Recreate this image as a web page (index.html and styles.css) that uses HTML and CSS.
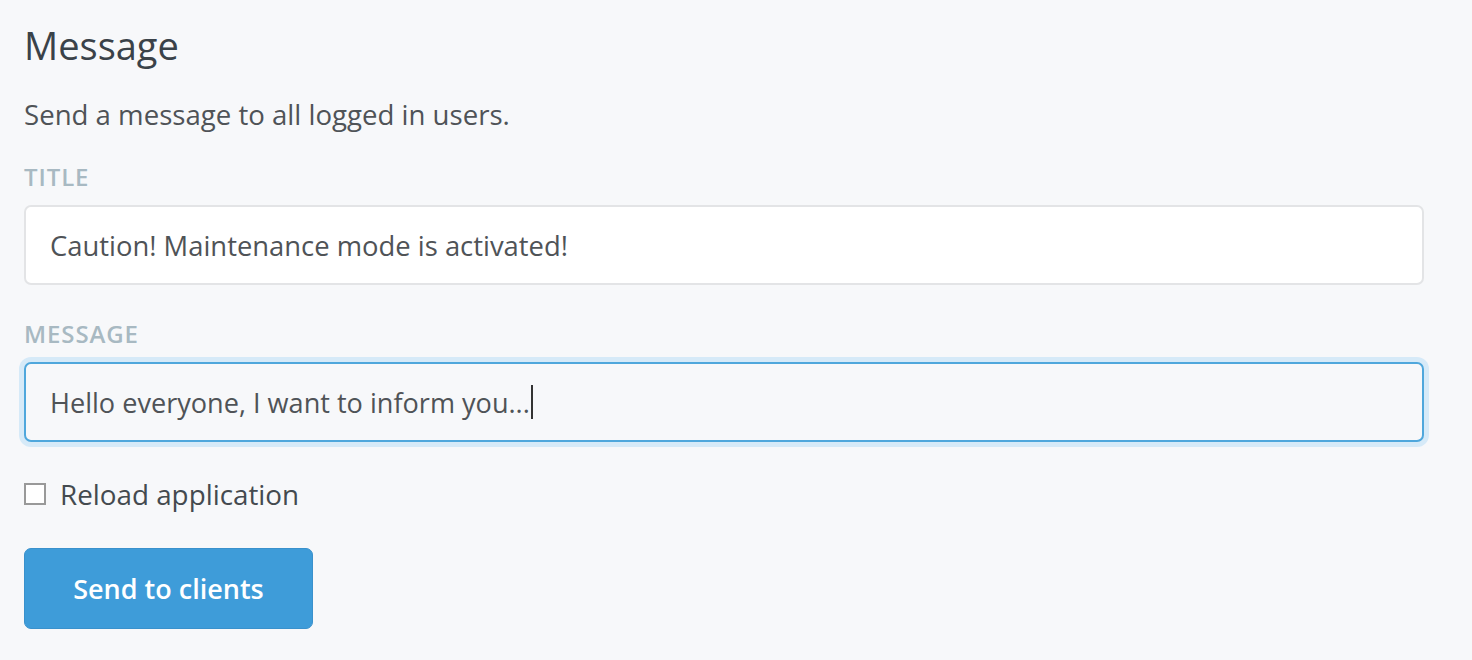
FILE: index.html
```html
<!DOCTYPE html>
<html lang="en">
<head>
<meta charset="utf-8">
<title>Message</title>
<link rel="stylesheet" href="styles.css">
</head>
<body>
<main class="page">
  <h1 class="title">Message</h1>
  <p class="intro">Send a message to all logged in users.</p>
  <form class="form">
    <div class="group">
      <label class="label" for="f-title">Title</label>
      <div class="input" id="f-title">Caution! Maintenance mode is activated!</div>
    </div>
    <div class="group">
      <label class="label" for="f-msg">Message</label>
      <div class="input input--focus" id="f-msg">Hello everyone, I want to inform you...<span class="caret"></span></div>
    </div>
    <label class="check">
      <span class="check__box"></span>
      <span class="check__text">Reload application</span>
    </label>
    <div class="actions">
      <button type="button" class="btn">Send to clients</button>
    </div>
  </form>
</main>
</body>
</html>
```
FILE: styles.css
```css
* { box-sizing: border-box; }
body {
  margin: 0;
  background: #f7f8fa;
  font-family: "Open Sans", "Noto Sans", sans-serif;
  color: #4f5357;
}
.page {
  padding: 17px 48px 0 24px;
}
.title {
  margin: 0;
  font-size: 38px;
  line-height: 56px;
  font-weight: 400;
  color: #3a4249;
}
.intro {
  margin: 21px 0 0;
  font-size: 27.6px;
  line-height: 40px;
}
.form {
  display: flex;
  flex-direction: column;
  margin-top: 28px;
}
.group {
  display: flex;
  flex-direction: column;
  gap: 13px;
}
.group + .group {
  margin-top: 34px;
}
.label {
  font-size: 24px;
  line-height: 30px;
  font-weight: 600;
  text-transform: uppercase;
  letter-spacing: 0.9px;
  color: #a8b9c2;
}
.input {
  display: flex;
  align-items: center;
  height: 80px;
  padding: 0 24px;
  background: #fff;
  border: 2px solid #e3e4e6;
  border-radius: 7px;
  font-size: 27.4px;
  color: #4f5357;
}
.input--focus {
  background: #f7f8fa;
  border-color: #4fa7dc;
  box-shadow: 0 0 0 5px #d6eaf8;
  font-size: 27.1px;
}
.caret {
  display: inline-block;
  width: 2px;
  height: 34px;
  background: #333;
  margin-left: 1px;
}
.check {
  display: flex;
  align-items: center;
  gap: 14px;
  margin-top: 32px;
  font-size: 27.8px;
  line-height: 40px;
  color: #444a4f;
}
.check__box {
  width: 22px;
  height: 22px;
  background: #fff;
  border: 2px solid #999;
}
.actions {
  margin-top: 34px;
}
.btn {
  height: 81px;
  width: 289px;
  border: 1px solid #3a91cc;
  border-radius: 7px;
  background: #3e9cd9;
  color: #fff;
  font-family: inherit;
  font-size: 27px;
  font-weight: 600;
}
```
